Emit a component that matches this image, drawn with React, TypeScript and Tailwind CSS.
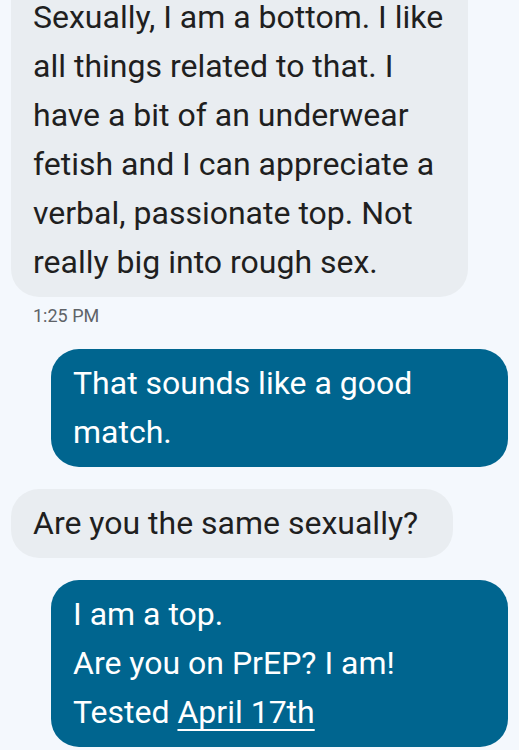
export default function App() {
  const font = { fontFamily: "Roboto, 'Liberation Sans', sans-serif" };
  return (
    <div
      className="w-[519px] h-[750px] overflow-hidden bg-[#f4f8fd] px-[11px] flex flex-col"
      style={font}
    >
      {/* top of this bubble is scrolled off screen */}
      <div className="w-[457px] rounded-b-[28px] bg-[#e9edf1] px-[22px] pb-[10px] text-[32px] leading-[49px] text-[#1f1f1f]">
        <div className="h-[42px] leading-[34px]">Sexually, I am a bottom. I like</div>
        all things related to that. I
        <br />
        have a bit of an underwear
        <br />
        fetish and I can appreciate a
        <br />
        verbal, passionate top. Not
        <br />
        really big into rough sex.
      </div>
      <div className="mt-[7px] pl-[22px] text-[18px] leading-[24px] text-[#5f6368]">1:25 PM</div>

      <div className="mt-[21px] self-end w-[457px] rounded-[28px] bg-[#00658f] px-[22px] py-[10px] text-[32px] leading-[49px] text-white">
        That sounds like a good
        <br />
        match.
      </div>

      <div className="mt-[22px] self-start w-fit rounded-[28px] bg-[#e9edf1] pl-[22px] pr-[35px] py-[10px] text-[32px] leading-[49px] text-[#1f1f1f]">
        Are you the same sexually?
      </div>

      <div className="mt-[22px] self-end w-[457px] rounded-[28px] bg-[#00658f] px-[22px] py-[10px] text-[32px] leading-[49px] text-white">
        I am a top.
        <br />
        Are you on PrEP? I am!
        <br />
        Tested <span className="underline underline-offset-[6px] decoration-[2px]">April 17th</span>
      </div>
    </div>
  );
}
